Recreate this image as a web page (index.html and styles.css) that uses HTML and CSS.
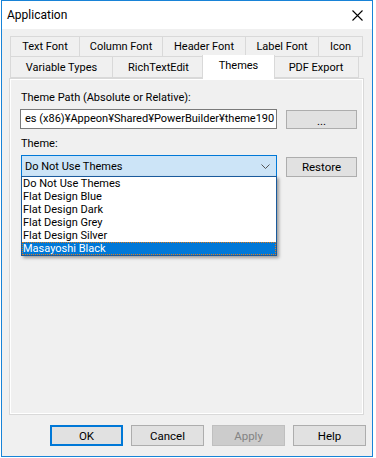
FILE: index.html
```html
<!DOCTYPE html>
<html lang="en">
<head>
    <meta charset="UTF-8">
    <title>Application</title>
    <link rel="stylesheet" href="styles.css">
</head>
<body>

    <div class="window">
        <div class="titlebar">
            <span class="title">Application</span>
            <svg class="close" width="11" height="11" viewBox="0 0 11 11">
                <path d="M0.5 0.5 L10.5 10.5 M10.5 0.5 L0.5 10.5" stroke="#000" stroke-width="1.1" fill="none"/>
            </svg>
        </div>

        <div class="client">
            <div class="tabs">
                <div class="tab-row">
                    <div class="tab w69">Text Font</div>
                    <div class="tab w83">Column Font</div>
                    <div class="tab w83">Header Font</div>
                    <div class="tab w73">Label Font</div>
                    <div class="tab w45">Icon</div>
                </div>
                <div class="tab-row">
                    <div class="tab w102">Variable Types</div>
                    <div class="tab w92">RichTextEdit</div>
                    <div class="tab w73 active">Themes</div>
                    <div class="tab w86">PDF Export</div>
                </div>
            </div>

            <div class="panel">
                <label class="field-label">Theme Path (Absolute or Relative):</label>
                <div class="field-row">
                    <div class="textbox">es (x86)¥Appeon¥Shared¥PowerBuilder¥theme190</div>
                    <button class="btn browse">...</button>
                </div>

                <label class="field-label theme-label">Theme:</label>
                <div class="field-row">
                    <div class="combo-wrap">
                        <div class="combo">
                            <span>Do Not Use Themes</span>
                            <svg class="chevron" width="9" height="5" viewBox="0 0 9 5">
                                <path d="M0.5 0.5 L4.5 4.5 L8.5 0.5" stroke="#555" fill="none"/>
                            </svg>
                        </div>
                        <ul class="dropdown">
                            <li>Do Not Use Themes</li>
                            <li>Flat Design Blue</li>
                            <li>Flat Design Dark</li>
                            <li>Flat Design Grey</li>
                            <li>Flat Design Silver</li>
                            <li class="selected">Masayoshi Black</li>
                        </ul>
                    </div>
                    <button class="btn restore">Restore</button>
                </div>
            </div>

            <div class="footer">
                <button class="btn default">OK</button>
                <button class="btn">Cancel</button>
                <button class="btn" disabled>Apply</button>
                <button class="btn">Help</button>
            </div>
        </div>
    </div>

</body>
</html>
```

FILE: styles.css
```css
body {
    margin: 0;
    background: #fff;
    font-family: "Roboto", "Liberation Sans", sans-serif;
    font-size: 11px;
    color: #000;
}
.window {
    margin-left: 1px;
    width: 370px;
    height: 455px;
    border: 1px solid #1883d7;
    background: #f0f0f0;
    display: flex;
    flex-direction: column;
}
.titlebar {
    height: 28px;
    background: #fff;
    display: flex;
    align-items: center;
    justify-content: space-between;
    padding: 0 9px 0 5px;
}
.title { font-size: 12px; }
.close { display: block; }

.client {
    flex: 1;
    display: flex;
    flex-direction: column;
    padding: 7px 8px 0 7px;
}
.tabs { display: flex; flex-direction: column; padding-left: 1px; }
.tab-row { display: flex; height: 21px; }
.tab {
    box-sizing: border-box;
    border: 1px solid #d9d9d9;
    border-right: none;
    display: flex;
    align-items: center;
    justify-content: center;
    background: #f0f0f0;
    flex-shrink: 0;
}
.tab-row .tab:last-child { border-right: 1px solid #d9d9d9; }
.tab-row + .tab-row .tab { border-top: none; }
.tab.active {
    background: #fff;
    border: 1px solid #d9d9d9;
    border-bottom: none;
    height: 24px;
    margin: -2px -2px 0 -2px;
    padding: 0 2px 3px;
    position: relative;
    z-index: 2;
}
.w45 { width: 45px; }
.w69 { width: 69px; }
.w73 { width: 73px; }
.w83 { width: 83px; }
.w86 { width: 86px; }
.w92 { width: 92px; }
.w102 { width: 102px; }

.panel {
    width: 355px;
    height: 337px;
    box-sizing: border-box;
    border: 1px solid #d9d9d9;
    box-shadow: inset 0 0 0 1px #fff;
    padding: 11px 0 0 10px;
    display: flex;
    flex-direction: column;
}
.field-label { display: block; line-height: 15px; padding-left: 1px; }
.theme-label { margin-top: 7px; }
.field-row {
    display: flex;
    align-items: flex-start;
    margin-top: 4px;
    gap: 9px;
}
.textbox {
    box-sizing: border-box;
    flex-shrink: 0;
    width: 257px;
    height: 20px;
    border: 1px solid #7a7a7a;
    background: #fff;
    padding: 0 4px;
    line-height: 18px;
    white-space: nowrap;
    overflow: hidden;
}
.btn {
    box-sizing: border-box;
    flex-shrink: 0;
    width: 73px;
    height: 21px;
    border: 1px solid #adadad;
    background: #e1e1e1;
    font-family: inherit;
    font-size: 11.5px;
    color: #000;
    padding: 0;
}
.btn:disabled { background: #cccccc; border-color: #bfbfbf; color: #838383; }
.btn.default { border: 2px solid #0078d7; }
.browse { width: 71px; height: 19px; margin-top: 1px; line-height: 20px; }
.restore { width: 71px; height: 20px; margin-top: 2px; }

.combo-wrap { position: relative; width: 256px; margin-left: 1px; flex-shrink: 0; }
.combo {
    box-sizing: border-box;
    height: 22px;
    border: 1px solid #0078d7;
    background: #cce4f7;
    display: flex;
    align-items: center;
    justify-content: space-between;
    padding: 0 6px 0 3px;
}
.chevron { display: block; }
.dropdown {
    position: absolute;
    top: 21px;
    left: 0;
    width: 256px;
    box-sizing: border-box;
    margin: 0;
    padding: 0;
    list-style: none;
    background: #fff;
    border: 1px solid #1a5a9c;
    box-shadow: 2px 2px 3px rgba(0, 0, 0, 0.35);
    z-index: 5;
}
.dropdown li {
    height: 13px;
    line-height: 13px;
    padding-left: 1px;
}
.dropdown li.selected {
    background: #0078d7;
    color: #fff;
    outline: 1px dotted #e07b18;
    outline-offset: -1px;
}

.footer {
    display: flex;
    justify-content: flex-end;
    gap: 8px;
    padding: 10px 0 0 0;
    margin-right: -2px;
}
```
